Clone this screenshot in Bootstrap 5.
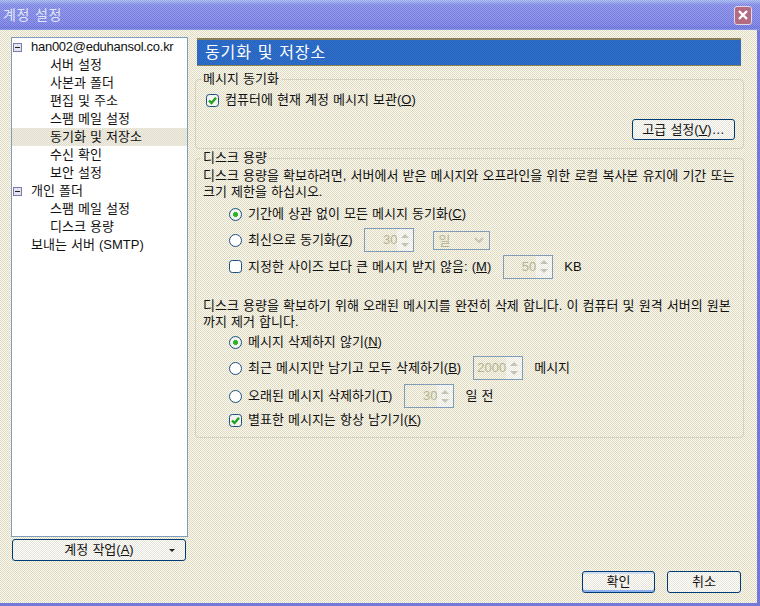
<!DOCTYPE html>
<html lang="ko">
<head>
  <meta charset="UTF-8" />
  <meta name="viewport" content="width=device-width, initial-scale=1.0"/>
  <title>계정 설정</title>
  <link href="https://cdn.jsdelivr.net/npm/bootstrap@5.3.0/dist/css/bootstrap.min.css" rel="stylesheet">
  <style>
    html, body { margin: 0; height: 606px; overflow: hidden; }
    body { font: 13px/16px "Liberation Sans", "Noto Sans CJK KR", sans-serif; word-spacing: .5px; color: #111; background: #ece9d8; }
    .dlg-win { width: 760px; height: 606px; padding: 0 3px 3px 0; display: flex; flex-direction: column;
      background: #7478d8; }
    .dlg-title { height: 30px; margin-right: -3px; padding: 0 8px 0 3px; color: #dfe6f8; font-size: 14px; letter-spacing: .6px;
      background:
        repeating-conic-gradient(#ffffff22 0 25%, #0000ff18 0 50%) 0 0/2px 2px,
        linear-gradient(#a9c0ee 0, #8890e2 5px, #7f86df 24px, #7078d8 28px, #8a9ae0 30px); }
    .dlg-close { width: 18px; height: 19px; padding: 0; border: 1px solid #dfd8e8; border-radius: 3px;
      background: #b46a80; display: flex; align-items: center; justify-content: center; }
    .dlg-body { flex: 1; min-height: 0; padding: 7px 13px 10px 11px;
      background: repeating-conic-gradient(#fbf9f0 0 25%, #dedac2 0 50%) 0 0/2px 2px; }
    .side-col { width: 177px; flex: none; }
    .side-tree { height: 500px; border: 1px solid #7f9db9; background: #fff; padding-top: 1px; list-style: none; margin: 0; }
    .side-tree li { height: 18px; line-height: 18px; padding-left: 19px; white-space: nowrap; display: flex; align-items: center; }
    .side-tree li.lvl2 { padding-left: 38px; }
    .side-tree li.cur { background: repeating-conic-gradient(#f0eee4 0 25%, #e0ddcd 0 50%) 0 0/2px 2px; }
    .acct-name { letter-spacing: -.27px; }
    .tree-tog { width: 9px; height: 9px; margin: 0 9px 0 -18px; border: 1px solid #7a7ab0; background: #e4e4ee; position: relative; flex: none; }
    .tree-tog::after { content: ""; position: absolute; left: 1px; right: 1px; top: 3px; height: 1px; background: #222; }
    .xp-btn { height: 22px; padding: 0; font: inherit; word-spacing: inherit; color: #111; border: 1px solid #003c74; border-radius: 3px;
      background: repeating-conic-gradient(#ffffff 0 25%, #e6e4d8 0 50%) 0 0/2px 2px; }
    .xp-btn.dflt { box-shadow: inset 0 -2px 0 #8cb0ee, inset 0 2px 0 #cfdcf6; }
    .acct-btn { width: 174px; margin: 2px 0 0 1px; position: relative; }
    .acct-btn::after { content: ""; position: absolute; right: 10px; top: 9px; border: 3px solid transparent; border-top-color: #222; border-bottom: 0; }
    .adv-btn { width: 103px; height: 21px; }
    .ok-btn { width: 73px; height: 22px; }
    .cancel-btn { width: 74px; height: 22px; margin: 0 3px 0 12px; }
    .main-col { width: 550px; margin-left: 6px; flex: none; }
    .main-head { width: 544px; height: 28px; margin: 1px 0 0 3px; padding-left: 8px; font-size: 16px; line-height: 25px; letter-spacing: .9px; color: #fff;
      border-top: 2px solid #8a8058; border-bottom: 1px solid #8a8058;
      background: repeating-conic-gradient(#2b62c4 0 25%, #2a70c4 0 50%) 0 0/2px 2px; }
    .grp { margin: 0 0 0 1px; padding: 0 8px 0 7px; border: 1px solid #d4d1bc; border-radius: 4px; min-width: 0; }
    .grp legend { float: none; width: auto; margin: 0 0 0 -2px; padding: 0 2px; font-size: 13px; line-height: 16px; }
    .grp-a { height: 78px; margin-top: 5px; }
    .grp-b { height: 288px; margin-top: 1px; }
    .opt-row { display: flex; align-items: center; white-space: nowrap; }
    .opt-ind { margin: 0 6px 0 0; float: none; width: 13px; height: 13px; flex: none; border: 1px solid #1c5180; background-color: #fff; border-radius: 0; box-shadow: none; }
    .opt-ind[type=radio] { border-radius: 50%; }
    .opt-ind:checked { background-color: #f4f4ee; border-color: #1c5180; }
    .opt-ind[type=checkbox]:checked { background-image: url("data:image/svg+xml,%3Csvg xmlns='http://www.w3.org/2000/svg' viewBox='0 0 11 11'%3E%3Cpath d='M2 5.5 4.5 8 9 2.8' fill='none' stroke='%2321a121' stroke-width='2.4'/%3E%3C/svg%3E"); background-size: 11px; }
    .opt-ind[type=radio]:checked { background-image: radial-gradient(circle, #2bb52b 0 2.2px, transparent 2.8px); background-size: auto; }
    .keep-row { margin: 5px 0 0 3px; }
    .adv-row { margin-top: 11px; }
    .ind-2 { padding-left: 26px; }
    .para-a, .para-b { white-space: nowrap; }
    .para-a { margin-top: 2px; }
    .para-b { margin-top: 18px; }
    .h24 { height: 24px; }
    .h20 { height: 20px; }
    .h26 { height: 26px; }
    .h27 { height: 27px; }
    .h28 { height: 28px; }
    .mt-1px { margin-top: 1px; }
    .spin-box { width: 50px; height: 24px; flex: none; display: flex; margin: 0 11px 0 12px; border: 1px solid #7f9db9; background: repeating-conic-gradient(#fbf9f0 0 25%, #dedac2 0 50%) 0 0/2px 2px; color: #b4b392; }
    .spin-val { flex: 1; text-align: right; line-height: 22px; }
    .spin-arr { width: 16px; display: flex; flex-direction: column; align-items: center; justify-content: space-around; padding: 2px 0; background: repeating-conic-gradient(#fff 0 25%, #e8e6da 0 50%) 0 0/2px 2px; }
    .spin-arr i { border: 4px solid transparent; border-top: 0; border-bottom: 4px solid #c4c4b4; }
    .spin-arr i + i { border-bottom: 0; border-top: 4px solid #c4c4b4; }
    .unit-sel { width: 57px; height: 19px; flex: none; margin-left: 8px; padding-left: 4px; line-height: 17px; display: flex; justify-content: space-between; border: 1px solid #7f9db9; color: #b4b392;
      background: repeating-conic-gradient(#fbf9f0 0 25%, #dedac2 0 50%) 0 0/2px 2px; }
    .unit-sel svg { margin: 5px 5px 0 0; }
    u { text-underline-offset: 1px; }
  </style>
</head>
<body>
  <div class="dlg-win">
    <div class="dlg-title d-flex align-items-center justify-content-between">
      <span>계정 설정</span>
      <button type="button" class="dlg-close" aria-label="닫기">
        <svg width="12" height="12" viewBox="0 0 12 12"><path d="M2 2 10 10M10 2 2 10" stroke="#fff" stroke-width="2.4"/></svg>
      </button>
    </div>
    <div class="dlg-body d-flex flex-column">
      <div class="d-flex">
        <!-- account tree -->
        <div class="side-col">
          <ul class="side-tree p-0">
            <li><span class="tree-tog"></span><span class="acct-name">han002@eduhansol.co.kr</span></li>
            <li class="lvl2">서버 설정</li>
            <li class="lvl2">사본과 폴더</li>
            <li class="lvl2">편집 및 주소</li>
            <li class="lvl2">스팸 메일 설정</li>
            <li class="lvl2 cur">동기화 및 저장소</li>
            <li class="lvl2">수신 확인</li>
            <li class="lvl2">보안 설정</li>
            <li><span class="tree-tog"></span>개인 폴더</li>
            <li class="lvl2">스팸 메일 설정</li>
            <li class="lvl2">디스크 용량</li>
            <li>보내는 서버 (SMTP)</li>
          </ul>
          <button type="button" class="xp-btn acct-btn">계정 작업(<u>A</u>)</button>
        </div>
        <!-- settings pane -->
        <div class="main-col">
          <div class="main-head">동기화 및 저장소</div>
          <fieldset class="grp grp-a">
            <legend>메시지 동기화</legend>
            <label class="opt-row keep-row"><input class="form-check-input opt-ind" type="checkbox" checked>컴퓨터에 현재 계정 메시지 보관(<u>O</u>)</label>
            <div class="d-flex justify-content-end adv-row">
              <button type="button" class="xp-btn adv-btn">고급 설정(<u>V</u>)…</button>
            </div>
          </fieldset>
          <fieldset class="grp grp-b">
            <legend>디스크 용량</legend>
            <div class="para-a">디스크 용량을 확보하려면, 서버에서 받은 메시지와 오프라인을 위한 로컬 복사본 유지에 기간 또는<br>크기 제한을 하십시오.</div>
            <div class="ind-2">
              <label class="opt-row h26 mt-1px"><input class="form-check-input opt-ind" type="radio" name="sync" checked>기간에 상관 없이 모든 메시지 동기화(<u>C</u>)</label>
              <div class="opt-row h26">
                <input class="form-check-input opt-ind" type="radio" name="sync">최신으로 동기화(<u>Z</u>)
                <div class="spin-box"><span class="spin-val">30</span><span class="spin-arr"><i></i><i></i></span></div>
                <div class="unit-sel">일<svg width="10" height="6" viewBox="0 0 10 6"><path d="M1 1 5 5 9 1" fill="none" stroke="#c4c4b4" stroke-width="2"/></svg></div>
              </div>
              <div class="opt-row h27">
                <input class="form-check-input opt-ind" type="checkbox">지정한 사이즈 보다 큰 메시지 받지 않음: (<u>M</u>)
                <div class="spin-box"><span class="spin-val">50</span><span class="spin-arr"><i></i><i></i></span></div>
                <span>KB</span>
              </div>
            </div>
            <div class="para-b">디스크 용량을 확보하기 위해 오래된 메시지를 완전히 삭제 합니다. 이 컴퓨터 및 원격 서버의 원본<br>까지 제거 합니다.</div>
            <div class="ind-2">
              <label class="opt-row h24"><input class="form-check-input opt-ind" type="radio" name="del" checked>메시지 삭제하지 않기(<u>N</u>)</label>
              <div class="opt-row h28">
                <input class="form-check-input opt-ind" type="radio" name="del">최근 메시지만 남기고 모두 삭제하기(<u>B</u>)
                <div class="spin-box"><span class="spin-val">2000</span><span class="spin-arr"><i></i><i></i></span></div>
                <span>메시지</span>
              </div>
              <div class="opt-row h28">
                <input class="form-check-input opt-ind" type="radio" name="del">오래된 메시지 삭제하기(<u>T</u>)
                <div class="spin-box"><span class="spin-val">30</span><span class="spin-arr"><i></i><i></i></span></div>
                <span>일 전</span>
              </div>
              <label class="opt-row h20"><input class="form-check-input opt-ind" type="checkbox" checked>별표한 메시지는 항상 남기기(<u>K</u>)</label>
            </div>
          </fieldset>
        </div>
      </div>
      <div class="d-flex justify-content-end mt-auto">
        <button type="button" class="xp-btn dflt ok-btn">확인</button>
        <button type="button" class="xp-btn cancel-btn">취소</button>
      </div>
    </div>
  </div>
  <script src="https://cdn.jsdelivr.net/npm/bootstrap@5.3.0/dist/js/bootstrap.bundle.min.js"></script>
</body>
</html>
